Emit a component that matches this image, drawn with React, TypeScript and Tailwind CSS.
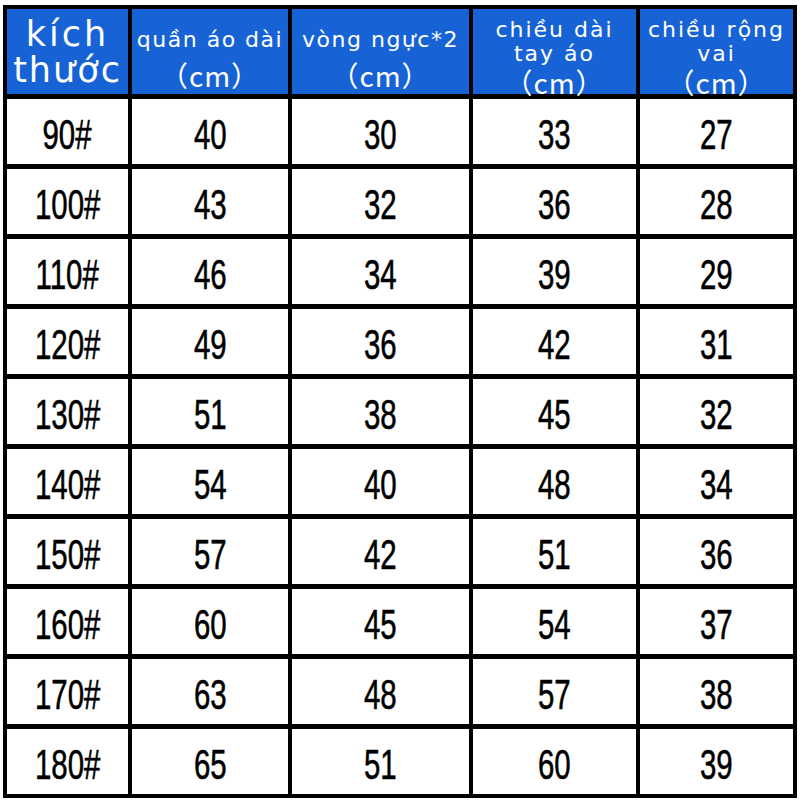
const headSans = "font-['DejaVu_Sans','Noto_Sans',sans-serif]";
const cjk = "font-['Noto_Sans_CJK_SC','DejaVu_Sans',sans-serif]";

const rows: [string, number, number, number, number][] = [
  ["90#", 40, 30, 33, 27],
  ["100#", 43, 32, 36, 28],
  ["110#", 46, 34, 39, 29],
  ["120#", 49, 36, 42, 31],
  ["130#", 51, 38, 45, 32],
  ["140#", 54, 40, 48, 34],
  ["150#", 57, 42, 51, 36],
  ["160#", 60, 45, 54, 37],
  ["170#", 63, 48, 57, 38],
  ["180#", 65, 51, 60, 39],
];

function Cm({ className = "" }: { className?: string }) {
  return (
    <span className={`${cjk} text-[28px] leading-[28px] tracking-[1px] ${className}`}>
      （cm）
    </span>
  );
}

function Num({ value }: { value: string | number }) {
  return (
    <div className="flex items-center justify-center bg-white pt-[6px]">
      <span className="inline-block scale-x-[0.7] font-['Liberation_Sans',Arial,sans-serif] text-[42px] leading-none text-black [-webkit-text-stroke:0.6px_black]">
        {value}
      </span>
    </div>
  );
}

export default function App() {
  return (
    <div className="h-[800px] w-[800px] overflow-hidden bg-white pl-[3px] pt-[5px]">
      <div className="grid w-[794px] grid-cols-[121px_156px_177px_163px_153px] grid-rows-[85px_repeat(10,65px)] gap-x-[4px] gap-y-[5px] bg-black p-[4px]">
        <div className={`flex flex-col items-center justify-center bg-[#1763d6] pt-[1px] text-white ${headSans}`}>
          <span className="text-[35px] leading-[36px] tracking-[3px]">kích</span>
          <span className="text-[35px] leading-[36px] tracking-[2px]">thước</span>
        </div>
        <div className={`flex flex-col items-center bg-[#1763d6] pt-[18px] text-white ${headSans}`}>
          <span className="whitespace-nowrap text-[22px] leading-[26px] tracking-[1.5px]">quần áo dài</span>
          <Cm className="mt-[8px]" />
        </div>
        <div className={`flex flex-col items-center bg-[#1763d6] pt-[18px] text-white ${headSans}`}>
          <span className="whitespace-nowrap text-[22px] leading-[26px] tracking-[1.5px]">vòng ngực*2</span>
          <Cm className="mt-[8px]" />
        </div>
        <div className={`flex flex-col items-center bg-[#1763d6] pt-[9px] text-white ${headSans}`}>
          <span className="whitespace-nowrap text-[22px] leading-[24px] tracking-[2px]">chiều dài</span>
          <span className="whitespace-nowrap text-[22px] leading-[24px] tracking-[2px]">tay áo</span>
          <Cm className="mt-[2px]" />
        </div>
        <div className={`flex flex-col items-center bg-[#1763d6] pt-[9px] text-white ${headSans}`}>
          <span className="whitespace-nowrap text-[22px] leading-[24px] tracking-[2px]">chiều rộng</span>
          <span className="whitespace-nowrap text-[22px] leading-[24px] tracking-[2px]">vai</span>
          <Cm className="mt-[2px]" />
        </div>
        {rows.map((r) => r.map((v, i) => <Num key={`${r[0]}-${i}`} value={v} />))}
      </div>
    </div>
  );
}
